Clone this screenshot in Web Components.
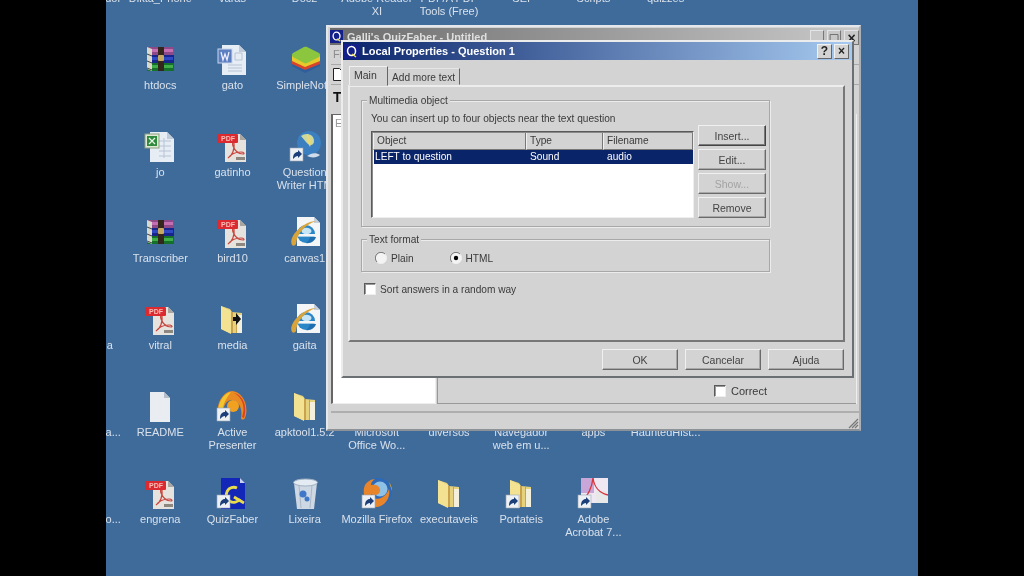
<!DOCTYPE html>
<html>
<head>
<meta charset="utf-8">
<title>QuizFaber</title>
<style>
  html, body { margin: 0; height: 100%; background: #000; overflow: hidden; }
  body { font: 11px "Liberation Sans", Arial, sans-serif; }
</style>
</head>
<body>
<desk-top>
  <desk-icon col="1" row="1">Compactador</desk-icon>
  <desk-icon col="2" row="1">Dikta_Phone</desk-icon>
  <desk-icon col="3" row="1">varas</desk-icon>
  <desk-icon col="4" row="1">Doc2</desk-icon>
  <desk-icon col="5" row="1">Adobe Reader<br>XI</desk-icon>
  <desk-icon col="6" row="1">PDF/A PDF<br>Tools (Free)</desk-icon>
  <desk-icon col="7" row="1">SEI</desk-icon>
  <desk-icon col="8" row="1">Scripts</desk-icon>
  <desk-icon col="9" row="1">quizzes</desk-icon>

  <desk-icon col="2" row="2" icon="rar">htdocs</desk-icon>
  <desk-icon col="3" row="2" icon="word">gato</desk-icon>
  <desk-icon col="4" row="2" icon="stacks">SimpleNote</desk-icon>

  <desk-icon col="2" row="3" icon="excel">jo</desk-icon>
  <desk-icon col="3" row="3" icon="pdf">gatinho</desk-icon>
  <desk-icon col="4" row="3" icon="globe">Question<br>Writer HTM</desk-icon>

  <desk-icon col="2" row="4" icon="rar">Transcriber</desk-icon>
  <desk-icon col="3" row="4" icon="pdf">bird10</desk-icon>
  <desk-icon col="4" row="4" icon="ie">canvas1</desk-icon>

  <desk-icon col="1" row="5">Fotografia</desk-icon>
  <desk-icon col="2" row="5" icon="pdf">vitral</desk-icon>
  <desk-icon col="3" row="5" icon="media">media</desk-icon>
  <desk-icon col="4" row="5" icon="ie">gaita</desk-icon>

  <desk-icon col="1" row="6">Documenta...</desk-icon>
  <desk-icon col="2" row="6" icon="doc">README</desk-icon>
  <desk-icon col="3" row="6" icon="active">Active<br>Presenter</desk-icon>
  <desk-icon col="4" row="6" icon="folder">apktool1.5.2</desk-icon>
  <desk-icon col="5" row="6">Microsoft<br>Office Wo...</desk-icon>
  <desk-icon col="6" row="6">diversos</desk-icon>
  <desk-icon col="7" row="6">Navegador<br>web em u...</desk-icon>
  <desk-icon col="8" row="6">apps</desk-icon>
  <desk-icon col="9" row="6">HauntedHist...</desk-icon>

  <desk-icon col="1" row="7">Embarcabo...</desk-icon>
  <desk-icon col="2" row="7" icon="pdf">engrena</desk-icon>
  <desk-icon col="3" row="7" icon="quiz">QuizFaber</desk-icon>
  <desk-icon col="4" row="7" icon="bin">Lixeira</desk-icon>
  <desk-icon col="5" row="7" icon="firefox">Mozilla Firefox</desk-icon>
  <desk-icon col="6" row="7" icon="folder">executaveis</desk-icon>
  <desk-icon col="7" row="7" icon="folderlink">Portateis</desk-icon>
  <desk-icon col="8" row="7" icon="acrobat">Adobe<br>Acrobat 7...</desk-icon>

  <main-window slot="windows"></main-window>
  <prop-dialog slot="windows"></prop-dialog>
</desk-top>

<script>
const LINK = `<rect x="1" y="18" width="13" height="13" fill="#eef1f4" stroke="#9aa6b2" stroke-width=".6"/>
  <path d="M4 29c0-5 2-7 5-7v-2l4 4-4 4v-2c-2 0-3 1-5 3z" fill="#1c3f7a"/>`;

const PAGE = `<path d="M6 2h17l7 7v23H6z" fill="#e6edf5"/><path d="M23 2l7 7h-7z" fill="#bfcbd8"/>`;

const PDF = `<path d="M9 4h15l6 6v22H9z" fill="#e6e2de"/><path d="M24 4l6 6h-6z" fill="#aaa59f"/>
  <path d="M12 28c4-2 7-9 6-15-1-2-2 0-1 3 2 5 6 8 10 8 2 0 1-2-2-2-5 0-10 2-13 6z" fill="none" stroke="#c8453c" stroke-width="1.200"/>
  <rect x="20" y="27" width="9" height="3" fill="#8d8780"/>
  <rect x="1" y="4" width="21" height="9" rx="1" fill="#dc2b30"/>
  <text x="5" y="11" font-family="Liberation Sans, sans-serif" font-size="7" font-weight="bold" fill="#f9bcb6">PDF</text>`;

const RAR = `<rect x="3" y="4" width="27" height="8" fill="#8e4a88"/><rect x="5" y="6" width="24" height="3" fill="#c56fb2"/>
  <rect x="3" y="12" width="27" height="8" fill="#17258c"/><rect x="5" y="14" width="24" height="3" fill="#2f49c4"/>
  <rect x="3" y="20" width="27" height="8" fill="#15702a"/><rect x="5" y="22" width="24" height="3" fill="#3fae48"/>
  <path d="M3 4l5 2v22l-5-2z" fill="#d8d8cc"/><path d="M3 11l5 2M3 18l5 2M3 25l5 2" stroke="#444" stroke-width="1"/>
  <rect x="14" y="4" width="6" height="24" fill="#33261c"/><rect x="14" y="12" width="6" height="6" rx="1" fill="#c7a860"/>`;

const FOLDER = `<path d="M5 3l9 3 2 3 10 1v20H14l-9-4z" fill="#e6d27c"/>
  <path d="M15 9h2v21h-2zM20 10h1v20h-1z" fill="#c9a24e"/>
  <path d="M21 12h5v18h-5z" fill="#f2f0dc"/>
  <path d="M5 3l10 5v23L5 26z" fill="#f2e291"/>`;

const IE = `<path d="M8 1h17l6 6v23H8z" fill="#f4f5f7"/><path d="M25 1l6 6h-6z" fill="#c4ced8"/>
  <circle cx="17" cy="18" r="9" fill="#2a86c6"/><ellipse cx="17.500" cy="15" rx="5" ry="3.200" fill="#c6e6f5"/>
  <rect x="9" y="18" width="17" height="2.600" fill="#f4f5f7"/><path d="M21 21h6c-1 4-6 7-10 6 2-1 3-3 4-6z" fill="#1f6fb0"/>
  <path d="M3 29C-1 22 12 6 27 5 15 9 8 18 7 28c-1 2-3 2-4 1z" fill="#d9a53a"/>`;

const ICONS = {
  rar: RAR,
  word: `${PAGE}<path d="M12 22h14M12 25h14M12 28h14M19 10h7v7h-7z" stroke="#b7c4d4" fill="none"/>
    <rect x="2" y="6" width="14" height="14" fill="#5b7fc0" stroke="#c9d5ea"/><path d="M5 9l2 8 2-6 2 6 2-8" fill="none" stroke="#eef" stroke-width="1.300"/>`,
  stacks: `<path d="M3 20v3l13 7 15-7v-3z" fill="#2c5f9c"/><path d="M3 17v4l13 6 15-6v-4z" fill="#d8432b"/>
    <path d="M3 13v5l13 6 15-6v-5z" fill="#e8c92c"/><path d="M15 4c1-.5 2-.5 3 0l12 6c1.500 1 1.500 3 0 4l-12 6c-1 .5-2 .5-3 0L4 14c-1.500-1-1.500-3 0-4z" fill="#8cc63e"/>`,
  excel: `${PAGE}<path d="M15 11h12M15 16h12M15 21h12M15 26h12M20 8v20" stroke="#b7c4d4"/>
    <rect x="1" y="4" width="14" height="14" fill="#dfe9d6" stroke="#8ba07e"/><rect x="3" y="6" width="10" height="10" fill="#2f8a3e"/><path d="M5 8l6 6M11 8l-6 6" stroke="#e8f5e4" stroke-width="1.300"/>`,
  pdf: PDF,
  globe: `<circle cx="20" cy="13" r="12" fill="#3b7fc0"/><path d="M12 6c5-4 13-2 13 5 0 5-5 5-8 1z" fill="#c9d9a0"/>
    <path d="M18 4c4 2 5 8 3 13-2-4-4-8-3-13z" fill="#e8d77a"/><path d="M18 26c4-3 9-4 13-1-3 3-9 3-13 1z" fill="#d0dcea"/>${LINK}`,
  ie: IE,
  media: `${FOLDER}<path d="M17 14h3v-4l5 6-5 6v-4h-3z" fill="#111"/>`,
  doc: `<path d="M6 2h14l6 6v25H6z" fill="#e9ecf0"/><path d="M20 2l6 6h-6z" fill="#b6bfc9"/>`,
  active: `<path d="M3 28C-2 14 8 1 16 1c9 0 18 13 13 27-1 2-4 2-4 0 2-10-3-18-9-18-7 0-10 8-8 18z" fill="#e98a22"/>
    <path d="M3 26C0 14 8 3 15 2c-4 5-9 12-9 24z" fill="#f3c52e"/><path d="M26 27c4-10 0-20-8-24 9 2 14 14 10 25z" fill="#d8432b"/>
    <circle cx="17" cy="16" r="6" fill="#f2a020"/>${LINK}`,
  folder: FOLDER,
  folderlink: `${FOLDER}${LINK}`,
  quiz: `<path d="M5 1h19l5 5v26H5z" fill="#1226b8"/><path d="M24 1l5 5h-5z" fill="#c9d2ee"/>
    <path d="M24 22a7.500 7.500 0 1 1 -3-11" fill="none" stroke="#e8dc4a" stroke-width="2.800"/><path d="M18 20l10 6" stroke="#e8dc4a" stroke-width="2.800"/>${LINK}`,
  bin: `<path d="M5 6h23l-3 26H8z" fill="#cdd8e4"/><ellipse cx="16.500" cy="5.500" rx="12" ry="3.500" fill="#e4ebf2" stroke="#9fb0c2"/>
    <path d="M10 8l2 23M23 8l-2 23" stroke="#a9b7c6"/><circle cx="14" cy="17" r="3.500" fill="#3f78c9"/><circle cx="18" cy="22" r="2.500" fill="#3f78c9"/>`,
  firefox: `<circle cx="17" cy="15" r="14" fill="#2c69b8"/><circle cx="19" cy="12" r="7.500" fill="#8fc0e6"/>
    <path d="M4 8c2-3 6-6 10-6-3 2-4 4-4 6 4-1 8 0 9 4 1 5-5 8-9 5 1 4 6 6 10 4 4-2 7-6 8-9 2 8-4 18-13 18C6 30 0 17 4 8z" fill="#e8842a"/>
    <path d="M28 5c2 3 3 6 3 9-1-3-2-6-3-9z" fill="#f0b030"/>${LINK}`,
  acrobat: `<rect x="4" y="1" width="27" height="25" fill="#efe8f3"/><path d="M4 1h13v15H4z" fill="#c8a6d8"/><path d="M19 14h12v12H19z" fill="#e8e8e8"/>
    <path d="M6 22c5-3 9-12 10-21 1 8 6 15 15 17" fill="none" stroke="#d8333a" stroke-width="1.300"/>${LINK}`
};

class DeskTop extends HTMLElement {
  connectedCallback() {
    this.attachShadow({ mode: 'open' });
    this.shadowRoot.innerHTML = `
      <style>
        :host { display: block; position: relative; width: 812px; height: 576px; margin-left: 106px; background: #3f6b9b; overflow: hidden; filter: blur(.5px); }
        .grid { display: grid; grid-template-columns: repeat(9, 72.2px); grid-auto-rows: 86.8px; margin: -44px 0 0 -54px; }
      </style>
      <div class="grid"><slot></slot></div>
      <slot name="windows"></slot>`;
  }
}
customElements.define('desk-top', DeskTop);

class DeskIcon extends HTMLElement {
  connectedCallback() {
    this.style.gridArea = this.getAttribute('row') + ' / ' + this.getAttribute('col');
    const art = ICONS[this.getAttribute('icon')] || '';
    this.attachShadow({ mode: 'open' });
    this.shadowRoot.innerHTML = `
      <style>
        :host { display: flex; flex-direction: column; align-items: center; color: #d9e1eb; font: 11px/13px "Liberation Sans", Arial, sans-serif; white-space: nowrap; text-align: center; }
        svg { width: 32px; height: 32px; flex: none; margin-bottom: 4px; }
      </style>
      <svg viewBox="0 0 32 32">${art}</svg>
      <div><slot></slot></div>`;
  }
}
customElements.define('desk-icon', DeskIcon);

class CapBtn extends HTMLElement {
  connectedCallback() {
    this.attachShadow({ mode: 'open' });
    this.shadowRoot.innerHTML = `
      <style>
        :host { display: flex; align-items: center; justify-content: center; width: 15px; height: 15px; box-sizing: border-box; background: #d3d3d3; color: #222; font: bold 12px/1 "Liberation Sans", Arial, sans-serif; border: 1px solid; border-color: #f2f2f2 #666 #666 #f2f2f2; }
        :host([flat]) { background: #c8c8c8; border-color: #e4e4e4 #777 #777 #e4e4e4; }
      </style>
      <slot></slot>`;
  }
}
customElements.define('cap-btn', CapBtn);

class WinBtn extends HTMLElement {
  connectedCallback() {
    this.attachShadow({ mode: 'open' });
    this.shadowRoot.innerHTML = `
      <style>
        :host { display: flex; align-items: center; justify-content: center; box-sizing: border-box; width: 68px; height: 21px; background: #d3d3d3; color: #444; font: 10.500px "Liberation Sans", Arial, sans-serif; border: 1px solid; border-color: #f0f0f0 #6a6a6a #6a6a6a #f0f0f0; box-shadow: inset -1px -1px 0 #a8a8a8; }
        :host([wide]) { width: 76px; }
        :host([strong]) { border-color: #f0f0f0 #444 #444 #f0f0f0; box-shadow: inset -1px -1px 0 #7a7a7a; }
        :host([disabled]) { color: #a3a3a3; }
      </style>
      <slot></slot>`;
  }
}
customElements.define('win-btn', WinBtn);

class GroupBox extends HTMLElement {
  connectedCallback() {
    this.attachShadow({ mode: 'open' });
    this.shadowRoot.innerHTML = `
      <style>
        :host { display: block; position: relative; box-sizing: border-box; width: 409px; border: 1px solid #a8a8a8; box-shadow: 1px 1px 0 #ececec, inset 1px 1px 0 #ececec; }
        .legend { position: absolute; left: 5px; top: -7px; padding: 0 2px; background: #d3d3d3; line-height: 13px; }
      </style>
      <div class="legend">${this.getAttribute('label')}</div>
      <slot></slot>`;
  }
}
customElements.define('group-box', GroupBox);

class ListView extends HTMLElement {
  connectedCallback() {
    this.attachShadow({ mode: 'open' });
    this.shadowRoot.innerHTML = `
      <style>
        :host { display: block; box-sizing: border-box; width: 323px; height: 87px; background: #fff; border: 1px solid; border-color: #5a5a5a #eee #eee #5a5a5a; box-shadow: inset 1px 1px 0 #8a8a8a; color: #3a3a3a; padding: 1px 0 0 1px; }
        .head { display: grid; grid-template-columns: 153px 77px 1fr; height: 16px; background: #d3d3d3; margin-bottom: 1px; }
        .head div { padding-left: 3px; line-height: 16px; border-right: 1px solid #777; border-bottom: 1px solid #777; border-left: 1px solid #f0f0f0; }
        .row { display: grid; grid-template-columns: 155px 77px 1fr; height: 14px; margin: 0 0 0 1px; background: #0a246a; color: #fff; line-height: 14px; }
        .row div { padding-left: 1px; }
      </style>
      <div class="head"><div>Object</div><div>Type</div><div>Filename</div></div>
      <div class="row"><div>LEFT to question</div><div>Sound</div><div>audio</div></div>`;
  }
}
customElements.define('list-view', ListView);

class RadioOpt extends HTMLElement {
  connectedCallback() {
    this.attachShadow({ mode: 'open' });
    const dot = this.hasAttribute('checked') ? '<circle cx="6" cy="6" r="2.200" fill="#000"/>' : '';
    this.shadowRoot.innerHTML = `
      <style>
        :host { display: flex; align-items: center; gap: 4px; }
        svg { width: 12px; height: 12px; }
      </style>
      <svg viewBox="0 0 12 12"><circle cx="6" cy="6" r="5.500" fill="#f4f4f4"/><path d="M10 2A5.500 5.500 0 0 0 2 10" fill="none" stroke="#777"/><path d="M10 2A5.500 5.500 0 0 1 2 10" fill="none" stroke="#eee"/>${dot}</svg>
      <slot></slot>`;
  }
}
customElements.define('radio-opt', RadioOpt);

class CheckOpt extends HTMLElement {
  connectedCallback() {
    this.attachShadow({ mode: 'open' });
    this.shadowRoot.innerHTML = `
      <style>
        :host { display: flex; align-items: center; gap: 5px; color: #3a3a3a; }
        i { display: block; box-sizing: border-box; width: 12px; height: 12px; background: #fff; border: 1px solid; border-color: #5a5a5a #eee #eee #5a5a5a; box-shadow: inset 1px 1px 0 #999; }
      </style>
      <i></i><slot></slot>`;
  }
}
customElements.define('check-opt', CheckOpt);

const QICON = `<svg viewBox="0 0 15 15" width="15" height="15"><rect width="15" height="15" fill="#14208a"/><path d="M7.500 2.500a4 4.500 0 1 0 .1 9a4 4.500 0 1 0 -.1 -9z" fill="none" stroke="#fff" stroke-width="1.500"/><path d="M8 10l4 3" stroke="#e8dc4a" stroke-width="1.500"/></svg>`;

class MainWindow extends HTMLElement {
  connectedCallback() {
    this.attachShadow({ mode: 'open' });
    this.shadowRoot.innerHTML = `
      <style>
        :host { position: absolute; left: 220px; top: 25px; width: 535px; height: 406px; box-sizing: border-box; display: flex; flex-direction: column; background: #d3d3d3; border: 2px solid #e4e8ec; border-right-color: #aab0b6; border-bottom-color: #8d9298; padding: 1px 0 0 3px; font: 11px "Liberation Sans", Arial, sans-serif; color: #3a3a3a; }
        .title { display: flex; align-items: center; gap: 4px; height: 17px; flex: none; margin-left: -1px; background: linear-gradient(90deg, #6c6c6c, #c8c8c8); color: #dedede; font-weight: bold; }
        .title svg { width: 13px; height: 15px; }
        .title span { flex: 1; }
        .caps { display: flex; gap: 3px; margin-top: 2px; }
        .caps cap-btn { font-size: 14px; }
        .menu { height: 19px; line-height: 19px; padding-left: 2px; color: #8c8c8c; flex: none; border-bottom: 1px solid #a9a9a9; }
        .tools { height: 19px; flex: none; display: flex; align-items: center; padding-left: 1px; border-bottom: 1px solid #a9a9a9; }
        .label { height: 29px; line-height: 24px; font-weight: bold; font-size: 14px; color: #111; padding-left: 2px; flex: none; }
        .body { flex: 1; display: flex; min-height: 0; padding-right: 3px; }
        .edit { width: 105px; box-sizing: border-box; background: #fff; border: 1px solid; border-color: #666 #eee #eee #666; border-left-width: 2px; padding: 2px 2px; color: #999; line-height: 13px; }
        .panel { flex: 1; display: flex; justify-content: flex-end; align-items: flex-end; padding: 0 89px 6px 0; margin-left: 1px; border-left: 1px solid #999; border-bottom: 1px solid #999; box-shadow: 1px 0 0 #eee; }
        .status { height: 18px; flex: none; box-sizing: border-box; margin-top: 7px; border-top: 2px solid #aeaeae; display: flex; justify-content: flex-end; align-items: flex-end; }
      </style>
      <div class="title">${QICON}<span>Galli's QuizFaber - Untitled</span>
        <div class="caps"><cap-btn flat style="width:14px">_</cap-btn><cap-btn flat style="width:14px">□</cap-btn><cap-btn flat>×</cap-btn></div></div>
      <div class="menu">File</div>
      <div class="tools"><svg width="11" height="13" viewBox="0 0 11 13"><path d="M1.500 .5h6l3 3v9h-9z" fill="#fff" stroke="#222"/></svg></div>
      <div class="label">T</div>
      <div class="body">
        <div class="edit">E</div>
        <div class="panel"><check-opt>Correct</check-opt></div>
      </div>
      <div class="status"><svg width="12" height="12" viewBox="0 0 12 12"><path d="M11 2L2 11M11 5l-6 6M11 8l-3 3" stroke="#777" stroke-width="1.200"/></svg></div>`;
  }
}
customElements.define('main-window', MainWindow);

class PropDialog extends HTMLElement {
  connectedCallback() {
    this.attachShadow({ mode: 'open' });
    this.shadowRoot.innerHTML = `
      <style>
        :host { position: absolute; left: 235px; top: 40px; width: 513px; height: 338px; box-sizing: border-box; display: flex; flex-direction: column; background: #d3d3d3; border: 2px solid; border-color: #ececec #6a6f73 #6a6f73 #ececec; font: 10.150px "Liberation Sans", Arial, sans-serif; color: #3a3a3a; }
        .title { flex: none; display: flex; align-items: center; gap: 3px; height: 18px; background: linear-gradient(90deg, #0a246a, #a6caf0); color: #fff; font: bold 11px "Liberation Sans", Arial, sans-serif; padding: 0 3px 0 1px; }
        .title span { flex: 1; }
        .caps { display: flex; gap: 2px; }
        .tabs { flex: none; display: flex; align-items: flex-end; height: 25px; padding-left: 6px; }
        .tab { box-sizing: border-box; height: 17px; line-height: 17px; padding: 0 4px; border: 1px solid; border-color: #e6e6e6 #666 transparent #666; margin-left: -1px; }
        .tab.on { height: 20px; line-height: 17px; width: 39px; padding: 0 4px; margin-left: 0; font-size: 10.500px; background: #d3d3d3; margin-bottom: -1px; position: relative; z-index: 1; border-color: #f0f0f0 #666 transparent #f0f0f0; }
        .page { flex: none; box-sizing: border-box; width: 497px; height: 257px; margin-left: 5px; border: 2px solid; border-color: #ededed #777 #777 #ededed; padding: 13px 0 0 11px; }
        .media { display: flex; height: 125px; }
        .left { padding: 11px 0 0 9px; }
        .left p { margin: 0 0 6px; line-height: 13px; }
        .btns { display: flex; flex-direction: column; gap: 3px; padding: 24px 0 0 4px; }
        .format { height: 31px; display: flex; align-items: center; gap: 36px; box-sizing: border-box; padding: 5px 0 0 13px; }
        .sort { margin: 11px 0 0 3px; gap: 4px; }
        .foot { flex: none; display: flex; justify-content: flex-end; gap: 7px; padding: 7px 8px 0 0; }
      </style>
      <div class="title">${QICON}<span>Local Properties - Question 1</span>
        <div class="caps"><cap-btn>?</cap-btn><cap-btn>×</cap-btn></div></div>
      <div class="tabs"><div class="tab on">Main</div><div class="tab">Add more text</div></div>
      <div class="page">
        <group-box label="Multimedia object">
          <div class="media">
            <div class="left"><p>You can insert up to four objects near the text question</p><list-view></list-view></div>
            <div class="btns"><win-btn strong>Insert...</win-btn><win-btn>Edit...</win-btn><win-btn disabled>Show...</win-btn><win-btn>Remove</win-btn></div>
          </div>
        </group-box>
        <group-box label="Text format" style="margin-top:12px">
          <div class="format"><radio-opt>Plain</radio-opt><radio-opt checked>HTML</radio-opt></div>
        </group-box>
        <check-opt class="sort">Sort answers in a random way</check-opt>
      </div>
      <div class="foot"><win-btn wide>OK</win-btn><win-btn wide>Cancelar</win-btn><win-btn wide>Ajuda</win-btn></div>`;
  }
}
customElements.define('prop-dialog', PropDialog);
</script>
</body>
</html>
